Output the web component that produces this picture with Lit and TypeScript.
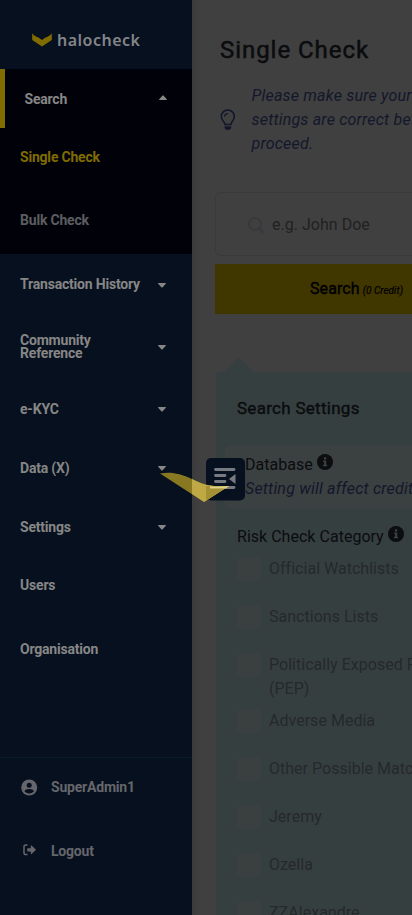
import { LitElement, html, css, nothing } from "lit";
import { customElement, property } from "lit/decorators.js";
import { classMap } from "lit/directives/class-map.js";

const caret = (up = false) => html`<svg class=${classMap({ caret: true, up })} width="8" height="5" viewBox="0 0 8 5">
  <path d="M.5 0h7c.5 0 .6.5.3.8L4.7 4.2c-.4.4-1 .4-1.4 0L.2.8C-.1.5 0 0 .5 0z" fill="currentColor" /></svg>`;

const info = html`<svg class="info" width="16" height="16" viewBox="0 0 16 16">
  <circle cx="8" cy="8" r="8" fill="#0b0d0e" />
  <path d="M7 3.2h2.2v2.2H7zM6.2 6.6h3v4.2h.9v1.5H6v-1.5h1.1V8.1h-.9z" fill="#3b4243" /></svg>`;

@customElement("side-menu")
export class SideMenu extends LitElement {
  static styles = css`
    :host { display: flex; flex-direction: column; width: 192px; height: 915px; flex: none; background: #07101e; color: #868686;
      font: 700 14px/13px Roboto, sans-serif; letter-spacing: -0.2px; box-sizing: border-box; }
    .logo { height: 69px; box-sizing: border-box; padding: 11px 0 0 32px; display: flex; align-items: center; gap: 5px; }
    .word { font: 600 16px/20px "Noto Sans", sans-serif; letter-spacing: 0.5px; color: #838588; }
    .group { background: #010209; height: 185px; }
    .row { display: flex; align-items: center; justify-content: space-between; padding: 0 26px 0 20px; box-sizing: border-box; }
    .open { height: 59px; border-left: 5px solid #806c00; padding: 2px 25px 0 19.5px; }
    .caret { margin-top: 1px; }
    .caret.up { transform: rotate(180deg); margin-top: -5px; }
    .h57 { height: 57px; } .h69 { height: 69px; } .h61 { height: 61px; } .h63 { height: 63px; }
    .h59 { height: 59px; } .h58 { height: 58px; } .h70 { height: 70px; } .h60 { height: 60px; }
    .sub { padding-top: 2px; }
    .yellow { color: #806c00; }
    .dim { color: #5c5d60; }
    .label { max-width: 125px; }
    .down { padding-top: 1px; }
    .foot { margin-top: auto; border-top: 1px solid #081b2b; height: 158px; box-sizing: border-box; }
    .user { display: flex; align-items: center; color: #65666b; padding-left: 20px; }
    .ico { width: 31px; display: flex; }
  `;
  private items: [string, string, boolean][] = [
    ["Transaction History", "h61", true],
    ["Community Reference", "h63", true],
    ["e-KYC", "h61 down", true],
    ["Data (X)", "h58", true],
    ["Settings", "h59 down", true],
    ["Users", "h58", false],
    ["Organisation", "h70", false],
  ];
  render() {
    return html`
      <div class="logo">
        <svg width="20" height="14" viewBox="0 0 20 14"><path d="M.2.300C2 3.500 6.500 4 10 7C13.500 4 18 3.500 19.800.300V7L10 13.500L.2 7Z" fill="#806c00" /></svg>
        <span class="word">halocheck</span>
      </div>
      <div class="group">
        <div class="row open"><span>Search</span>${caret(true)}</div>
        <div class="row h57 sub yellow">Single Check</div>
        <div class="row h69 sub dim">Bulk Check</div>
      </div>
      ${this.items.map(([t, h, c]) => html`<div class="row ${h}"><span class="label">${t === "Community Reference" ? html`Community<br />Reference` : t}</span>${c ? caret() : nothing}</div>`)}
      <div class="foot">
        <div class="user h58"><span class="ico"><svg width="18" height="18" viewBox="0 0 18 18">
          <circle cx="9.200" cy="9.500" r="8" fill="#65666b" /><circle cx="9.200" cy="7.200" r="2.500" fill="#07101e" />
          <path d="M4.500 13.500c.6-1.800 2-2.500 4.700-2.500s4.100.7 4.700 2.500c-2.700 2.600-6.700 2.600-9.400 0z" fill="#07101e" /></svg></span>SuperAdmin1</div>
        <div class="user h70"><span class="ico"><svg width="18" height="16" viewBox="0 0 18 16">
          <path d="M7.500 2H5.800Q4 2 4 3.800V9.700Q4 11.500 5.800 11.500H7.500" fill="none" stroke="#65666b" stroke-width="1.500" />
          <path d="M7.800 5.200h3V2.700Q11 2.100 11.600 2.600L15.800 6.400Q16.100 6.800 15.800 7.100L11.600 10.900Q11 11.400 10.800 10.800V8.400h-3Q7.200 8.400 7.200 7.800V5.800Q7.200 5.200 7.800 5.200z" fill="#65666b" /></svg></span>Logout</div>
      </div>`;
  }
}

@customElement("check-option")
export class CheckOption extends LitElement {
  @property() label = "";
  static styles = css`
    :host { display: flex; gap: 8px; min-height: 48px; color: #24292b; align-items: flex-start; }
    .box { width: 24px; height: 24px; border-radius: 4px; background: #3a4040; flex: none; }
    .text { white-space: pre; }
  `;
  render() {
    return html`<span class="box"></span><span class="text">${this.label}</span>`;
  }
}

@customElement("app-root")
export class AppRoot extends LitElement {
  static styles = css`
    :host { display: flex; position: relative; width: 412px; height: 915px; overflow: hidden; background: #404040;
      font: 400 16px/24px Roboto, sans-serif; letter-spacing: 0.02px; color: #0a0c0e; }
    .main { width: 220px; height: 915px; overflow: hidden; box-sizing: border-box; padding: 34px 0 0 23px; white-space: nowrap;
      background: linear-gradient(90deg, #3b3b3b, #404040 8px); }
    .title { font: 400 24px/32px Roboto, sans-serif; letter-spacing: 0.95px; -webkit-text-stroke: 0.5px; padding-left: 5px; margin: 0; }
    .tip { display: flex; align-items: center; gap: 15.5px; margin-top: 18px; padding-left: 5px; font-style: italic; color: #13172b; letter-spacing: 0.2px; }
    .tip svg { flex: none; }
    .field { width: 360px; height: 64px; margin-top: 36px; box-sizing: border-box; border: 1px solid #3a3a3c; border-radius: 5px;
      display: flex; align-items: center; padding: 2px 0 0 32px; gap: 8px; color: #202123; }
    .btn { width: 366px; height: 50px; margin-top: 8px; background: #403600; color: #000; display: flex; align-items: center; letter-spacing: 0.1px; -webkit-text-stroke: 0.4px; padding-left: 95px; box-sizing: border-box; gap: 3px; }
    .credit { font: italic 400 10px/12px Roboto, sans-serif; letter-spacing: 0; -webkit-text-stroke: 0.2px; padding-top: 4px; }
    .tri { display: block; margin: 43px 0 0 9px; }
    .panel { width: 380px; margin-left: 1px; height: 560px; background: #363f40; border-radius: 4px 0 0 0; padding: 24px 0 0 21px; box-sizing: border-box; }
    .h { font-size: 17px; letter-spacing: 0.28px; -webkit-text-stroke: 0.4px; }
    .card { margin: 25px 0 0 -12px; height: 64px; background: #3b4041; border-radius: 5px; padding: 8px 0 0 20px; box-sizing: border-box; }
    .info { vertical-align: 0; margin-left: 4px; }
    .note { font-style: italic; color: #13172b; letter-spacing: 0.2px; }
    .risk { margin-top: 16px; margin-bottom: 8px; }
    .opts { display: flex; flex-direction: column; }
    .pep { min-height: 56px; }
    .toggle { position: absolute; left: 206px; top: 458px; }
    .loader { position: absolute; left: 160px; top: 472px; }
  `;
  render() {
    return html`
      <side-menu></side-menu>
      <div class="main">
        <h1 class="title">Single Check</h1>
        <div class="tip">
          <svg width="16" height="22" viewBox="0 0 16 22" fill="none" stroke="#13172b" stroke-width="1.600">
            <path d="M5 15.500C5 13 1.300 11.500 1.300 7.500A6.500 6.500 0 0 1 14.300 7.500C14.300 11.500 10.800 13 10.800 15.500Z" />
            <path d="M4.600 7.200Q5 4.700 7.600 4.600" stroke-width="1.300" stroke-linecap="round" />
            <path d="M4.600 17.200h6.600v1.800q-.5 2-3.300 2t-3.300-2z" fill="#13172b" stroke="none" /></svg>
          <span>Please make sure your<br />settings are correct before you<br />proceed.</span>
        </div>
        <div class="field">
          <svg width="16" height="16" viewBox="0 0 16 16" fill="none" stroke="#38383d" stroke-width="1.800" stroke-linecap="round"><circle cx="7" cy="7" r="6" /><path d="M11.500 11.500L15 15" /></svg>
          <span>e.g. John Doe</span>
        </div>
        <div class="btn"><span>Search</span><span class="credit">(0 Credit)</span></div>
        <svg class="tri" width="30" height="15" viewBox="0 0 30 15"><path d="M0 15L15 0L30 15z" fill="#363f40" /></svg>
        <div class="panel">
          <div class="h">Search Settings</div>
          <div class="card"><div>Database${info}</div><div class="note">Setting will affect credit usage</div></div>
          <div class="risk">Risk Check Category${info}</div>
          <div class="opts">
            <check-option label="Official Watchlists"></check-option>
            <check-option label="Sanctions Lists"></check-option>
            <check-option class="pep" .label=${"Politically Exposed Person\n(PEP)"}></check-option>
            <check-option label="Adverse Media"></check-option>
            <check-option label="Other Possible Matches"></check-option>
            <check-option label="Jeremy"></check-option>
            <check-option label="Ozella"></check-option>
            <check-option label="ZZAlexandre"></check-option>
          </div>
        </div>
      </div>
      <svg class="toggle" width="39" height="43" viewBox="0 0 39 43">
        <rect width="39" height="42.500" rx="5" fill="#07101e" />
        <path d="M9.500 11.500H28M9.500 17.500H19M9.500 23.500H19M9.500 29.500H28" stroke="#777a80" stroke-width="2.800" stroke-linecap="round" />
        <path d="M29.500 16v10L23 21z" fill="#777a80" />
      </svg>
      <svg class="loader" width="70" height="31" viewBox="0 0 70 31">
        <path d="M0 1.500C11-.5 20 1.500 32 7C44 13 50 15 69 14L44 30z" fill="#887822" />
        <path d="M32 7C44 13 50 15 69 14L44 30L32 22z" fill="#bfa944" />
        <path d="M46 13.900Q57 14.800 69 14L60 19.500L46 28.700z" fill="#a59134" />
        <path d="M50 14.200Q58 14.800 69 14L66 16.500H50z" fill="#ddd184" />
      </svg>`;
  }
}
